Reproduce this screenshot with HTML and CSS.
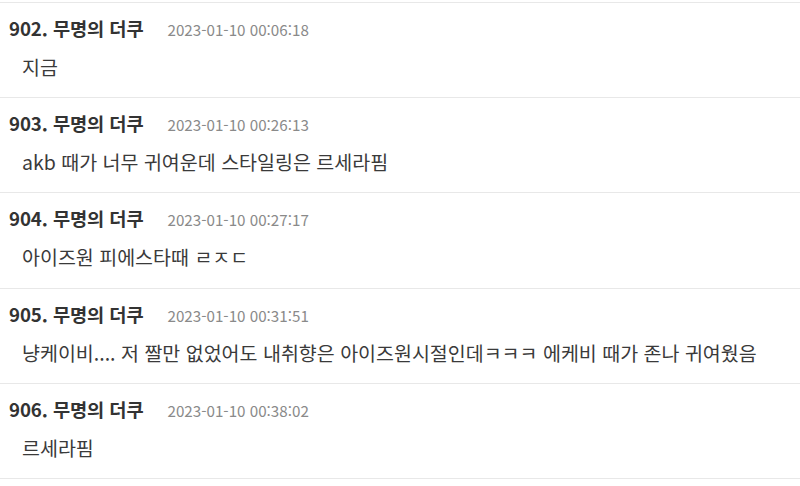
FILE: index.html
```html
<!DOCTYPE html>
<html lang="ko">
<head>
<meta charset="utf-8">
<link rel="stylesheet" href="styles.css">
</head>
<body>
<ul class="comments">
  <li class="comment">
    <div class="meta"><span class="name">902. 무명의 더쿠</span><span class="date">2023-01-10 00:06:18</span></div>
    <div class="text">지금</div>
  </li>
  <li class="comment">
    <div class="meta"><span class="name">903. 무명의 더쿠</span><span class="date">2023-01-10 00:26:13</span></div>
    <div class="text">akb 때가 너무 귀여운데 스타일링은 르세라핌</div>
  </li>
  <li class="comment">
    <div class="meta"><span class="name">904. 무명의 더쿠</span><span class="date">2023-01-10 00:27:17</span></div>
    <div class="text">아이즈원 피에스타때 ㄹㅈㄷ</div>
  </li>
  <li class="comment">
    <div class="meta"><span class="name">905. 무명의 더쿠</span><span class="date">2023-01-10 00:31:51</span></div>
    <div class="text">냥케이비.... 저 짤만 없었어도 내취향은 아이즈원시절인데ㅋㅋㅋ 에케비 때가 존나 귀여웠음</div>
  </li>
  <li class="comment">
    <div class="meta"><span class="name">906. 무명의 더쿠</span><span class="date">2023-01-10 00:38:02</span></div>
    <div class="text">르세라핌</div>
  </li>
</ul>
</body>
</html>
```
FILE: styles.css
```css
html, body {
  margin: 0;
  padding: 0;
  background: #fff;
}
body {
  font-family: "Noto Sans CJK KR", "Noto Sans", sans-serif;
  color: #333;
}
.comments {
  list-style: none;
  margin: 2px 0 0;
  padding: 0;
  border-top: 1px solid #e8e8e8;
}
.comment {
  height: 94.2px;
  border-bottom: 1px solid #e8e8e8;
  padding: 0 0 0 9px;
  box-sizing: content-box;
}
.meta {
  display: flex;
  align-items: baseline;
  padding-top: 10px;
  height: 30px;
  box-sizing: content-box;
}
.name {
  font-size: 18.7px;
  font-weight: 700;
  color: #333;
  line-height: 30px;
  letter-spacing: -0.1px;
}
.date {
  font-size: 15.2px;
  color: #8a8a8a;
  margin-left: 24px;
}
.text {
  font-size: 19.5px;
  color: #3a3a3a;
  padding-left: 13px;
  line-height: 26px;
  margin-top: 11px;
}
```
